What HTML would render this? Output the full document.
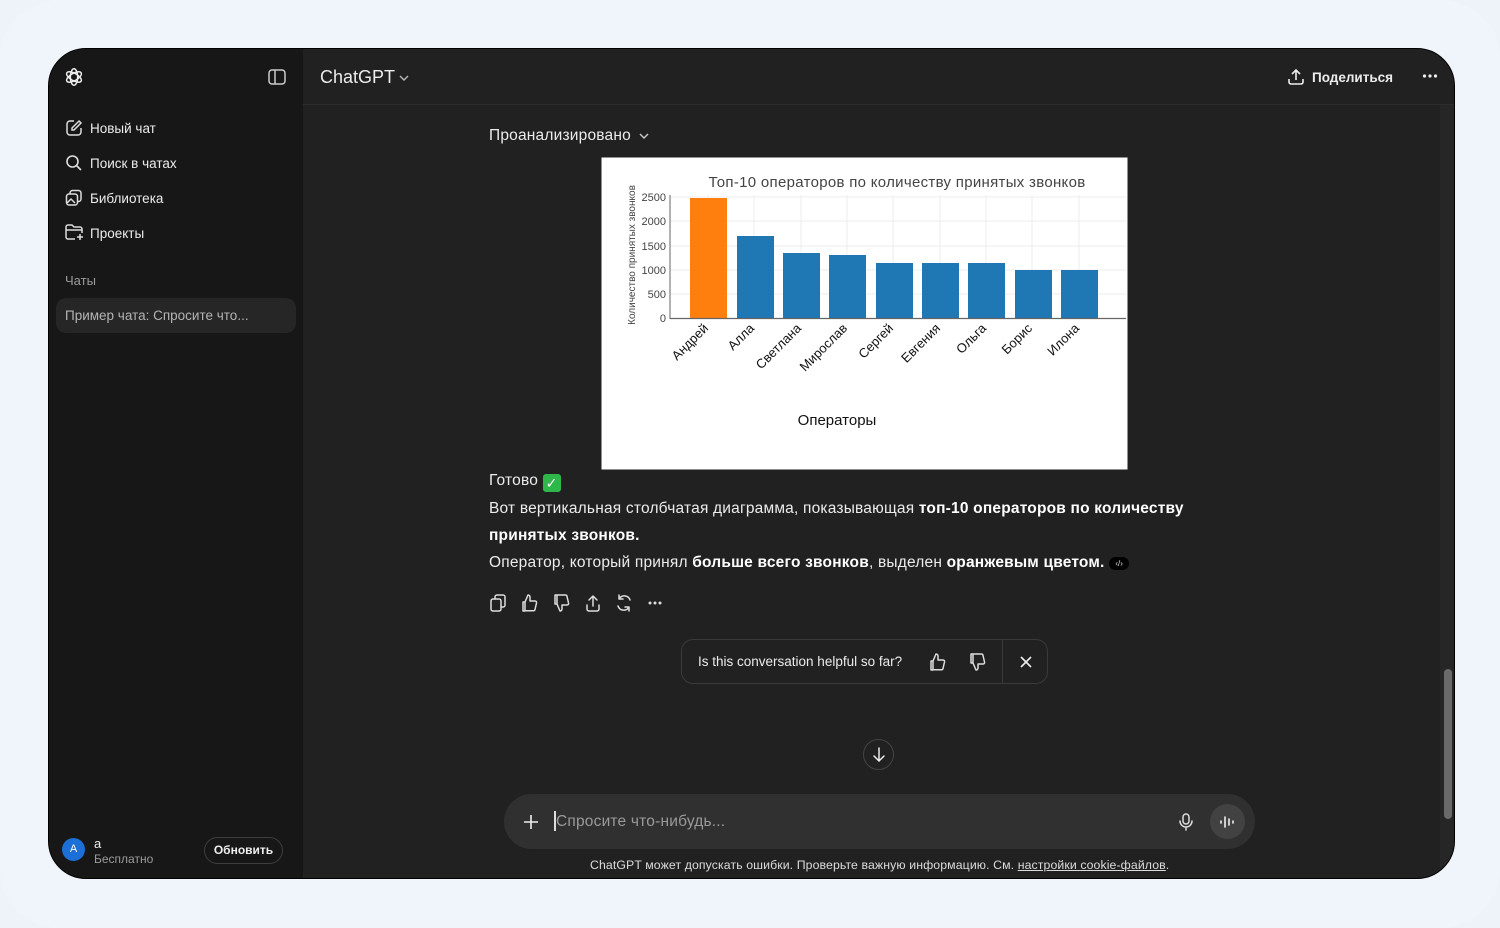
<!DOCTYPE html>
<html><head><meta charset="utf-8"><style>
*{margin:0;padding:0;box-sizing:border-box}
body{width:1500px;height:928px;background:#eef3fa;font-family:"Liberation Sans","DejaVu Sans",sans-serif;position:relative;overflow:hidden;color:#ececec}
.outer{position:absolute;left:0;top:0;width:1500px;height:928px;border-radius:60px;background:#f0f5fc}
.win{position:absolute;left:48px;top:48px;width:1407px;height:831px;border-radius:38px;background:#212121;overflow:hidden;border:1px solid #000}
.side{position:absolute;left:0;top:0;width:254px;height:100%;background:#171717}
.a{position:absolute;white-space:nowrap}
.nav{font-size:13.5px;color:#ececec}
svg{position:absolute}
.b{font-weight:bold;color:#fff}
.t{font-size:15.5px;letter-spacing:0.2px}
</style></head><body>
<div class="outer"></div>
<div class="win">
 <div class="side">
  <svg style="left:14px;top:17px" width="22" height="22" viewBox="0 0 24 24" fill="none" stroke="#eee" stroke-width="1.6"><g transform="translate(12 12)"><ellipse rx="4" ry="9" transform="rotate(0)"/><ellipse rx="4" ry="9" transform="rotate(60)"/><ellipse rx="4" ry="9" transform="rotate(120)"/></g></svg>
  <svg style="left:219px;top:20px" width="18" height="16" viewBox="0 0 18 16" fill="none" stroke="#ccc" stroke-width="1.5"><rect x="1" y="1" width="16" height="14" rx="3"/><line x1="7" y1="1" x2="7" y2="15"/></svg>
  <svg style="left:16px;top:70px" width="18" height="18" viewBox="0 0 18 18" fill="none" stroke="#ddd" stroke-width="1.5"><path d="M9 2H5a3 3 0 0 0-3 3v8a3 3 0 0 0 3 3h8a3 3 0 0 0 3-3V9"/><path d="M14 2l2 2-7 7H7V9z"/></svg>
  <div class="a nav" style="left:41px;top:72px">Новый чат</div>
  <svg style="left:16px;top:105px" width="18" height="18" viewBox="0 0 18 18" fill="none" stroke="#ddd" stroke-width="1.6"><circle cx="7.5" cy="7.5" r="5.5"/><line x1="11.5" y1="11.5" x2="16" y2="16"/></svg>
  <div class="a nav" style="left:41px;top:107px">Поиск в чатах</div>
  <svg style="left:16px;top:140px" width="18" height="18" viewBox="0 0 18 18" fill="none" stroke="#ddd" stroke-width="1.5"><rect x="1.5" y="5" width="11" height="11" rx="2.5"/><path d="M5 5V4a2.5 2.5 0 0 1 2.5-2.5h6A2.5 2.5 0 0 1 16 4v6a2.5 2.5 0 0 1-2.5 2.5h-1"/><path d="M2 14l4-4 4 4"/></svg>
  <div class="a nav" style="left:41px;top:142px">Библиотека</div>
  <svg style="left:16px;top:175px" width="19" height="18" viewBox="0 0 19 18" fill="none" stroke="#ddd" stroke-width="1.5"><path d="M10 15H3a2 2 0 0 1-2-2V3a2 2 0 0 1 2-2h4l2 2h6a2 2 0 0 1 2 2v4"/><line x1="1" y1="6" x2="17" y2="6"/><path d="M15 10v6M12 13h6"/></svg>
  <div class="a nav" style="left:41px;top:177px">Проекты</div>
  <div class="a" style="left:16px;top:224px;font-size:13px;color:#9b9b9b">Чаты</div>
  <div class="a" style="left:7px;top:249px;width:240px;height:35px;border-radius:10px;background:#262626"></div>
  <div class="a" style="left:16px;top:259px;font-size:13.5px;color:#b4b4b4">Пример чата: Спросите что...</div>
  <div class="a" style="left:13px;top:789px;width:23px;height:23px;border-radius:50%;background:#1b6fd6;color:#fff;font-size:11px;text-align:center;line-height:23px">A</div>
  <div class="a" style="left:45px;top:787px;font-size:13px;color:#eee">a</div>
  <div class="a" style="left:45px;top:803px;font-size:12px;color:#9b9b9b">Бесплатно</div>
  <div class="a" style="left:155px;top:788px;width:79px;height:27px;border:1px solid #3e3e3e;border-radius:14px;font-size:12px;font-weight:bold;color:#eee;text-align:center;line-height:25px">Обновить</div>
 </div>
 <div class="a" style="left:254px;top:55px;width:1153px;height:1px;background:#2c2c2c"></div>
 <div class="a" style="left:271px;top:18px;font-size:18px;color:#ececec">ChatGPT</div>
 <svg style="left:349px;top:24px" width="12" height="10" viewBox="0 0 12 10" fill="none" stroke="#bbb" stroke-width="1.4"><path d="M2 3l4 4 4-4"/></svg>
 <svg style="left:1238px;top:19px" width="18" height="18" viewBox="0 0 18 18" fill="none" stroke="#eee" stroke-width="1.6"><path d="M9 12V2M5 6l4-4 4 4"/><path d="M2 11v3a2 2 0 0 0 2 2h10a2 2 0 0 0 2-2v-3"/></svg>
 <div class="a" style="left:1263px;top:21px;font-size:13.5px;font-weight:bold;color:#ececec">Поделиться</div>
 <svg style="left:1373px;top:24px" width="16" height="6" viewBox="0 0 16 6" fill="#eee"><circle cx="2.5" cy="3" r="1.6"/><circle cx="8" cy="3" r="1.6"/><circle cx="13.5" cy="3" r="1.6"/></svg>
 <div class="a" style="left:1391px;top:56px;width:14px;height:775px;background:#262626"></div>
 <div class="a" style="left:1395px;top:620px;width:8px;height:150px;border-radius:4px;background:#6a6a6a"></div>

 <div class="a t" style="left:440px;top:78px;color:#ececec">Проанализировано</div>
 <svg style="left:589px;top:82px" width="12" height="10" viewBox="0 0 12 10" fill="none" stroke="#ccc" stroke-width="1.4"><path d="M2 3l4 4 4-4"/></svg>

 <svg style="left:552px;top:108px" width="527" height="313" viewBox="0 0 527 313" font-family="Liberation Sans, DejaVu Sans, sans-serif">
  <rect x="0" y="0" width="527" height="313" fill="#fff" stroke="#222" stroke-width="1"/>
  <g stroke="#ececec" stroke-width="1">
   <line x1="69" y1="40" x2="525" y2="40"/><line x1="69" y1="64" x2="525" y2="64"/><line x1="69" y1="89" x2="525" y2="89"/><line x1="69" y1="113" x2="525" y2="113"/><line x1="69" y1="137" x2="525" y2="137"/>
   <line x1="107" y1="38" x2="107" y2="161"/><line x1="153" y1="38" x2="153" y2="161"/><line x1="200" y1="38" x2="200" y2="161"/><line x1="246" y1="38" x2="246" y2="161"/><line x1="292" y1="38" x2="292" y2="161"/><line x1="339" y1="38" x2="339" y2="161"/><line x1="385" y1="38" x2="385" y2="161"/><line x1="431" y1="38" x2="431" y2="161"/><line x1="478" y1="38" x2="478" y2="161"/>
  </g>
  <rect x="89" y="41" width="37" height="120" fill="#ff7f0e"/>
  <g fill="#1f77b4">
   <rect x="136" y="79" width="37" height="82"/><rect x="182" y="96" width="37" height="65"/><rect x="228" y="98" width="37" height="63"/><rect x="275" y="106" width="37" height="55"/><rect x="321" y="106" width="37" height="55"/><rect x="367" y="106" width="37" height="55"/><rect x="414" y="113" width="37" height="48"/><rect x="460" y="113" width="37" height="48"/>
  </g>
  <line x1="69" y1="38" x2="69" y2="162" stroke="#666"/>
  <line x1="69" y1="161.5" x2="525" y2="161.5" stroke="#666" stroke-width="1.2"/>
  <text x="296" y="30" font-size="15" fill="#444" text-anchor="middle" letter-spacing="0.3">Топ-10 операторов по количеству принятых звонков</text>
  <g font-size="11" fill="#444" text-anchor="end">
   <text x="65" y="44">2500</text><text x="65" y="68">2000</text><text x="65" y="93">1500</text><text x="65" y="117">1000</text><text x="65" y="141">500</text><text x="65" y="165">0</text>
  </g>
  <text transform="translate(34 98) rotate(-90)" font-size="10" fill="#444" text-anchor="middle">Количество принятых звонков</text>
  <g font-size="13" fill="#111" text-anchor="end">
   <text transform="translate(108 172) rotate(-45)">Андрей</text>
   <text transform="translate(154 172) rotate(-45)">Алла</text>
   <text transform="translate(201 172) rotate(-45)">Светлана</text>
   <text transform="translate(247 172) rotate(-45)">Мирослав</text>
   <text transform="translate(293 172) rotate(-45)">Сергей</text>
   <text transform="translate(340 172) rotate(-45)">Евгения</text>
   <text transform="translate(386 172) rotate(-45)">Ольга</text>
   <text transform="translate(432 172) rotate(-45)">Борис</text>
   <text transform="translate(479 172) rotate(-45)">Илона</text>
  </g>
  <text x="236" y="268" font-size="15" fill="#111" text-anchor="middle">Операторы</text>
 </svg>

 <div class="a t" style="left:440px;top:423px;color:#ececec">Готово <span style="display:inline-block;width:18px;height:18px;background:#2fb84a;border-radius:3px;color:#fff;font-size:14px;text-align:center;line-height:18px;vertical-align:-3px;font-weight:bold">✓</span></div>
 <div class="a t" style="left:440px;top:451px;color:#ececec">Вот вертикальная столбчатая диаграмма, показывающая <span class="b">топ-10 операторов по количеству</span></div>
 <div class="a t" style="left:440px;top:478px"><span class="b">принятых звонков.</span></div>
 <div class="a t" style="left:440px;top:505px;color:#ececec">Оператор, который принял <span class="b">больше всего звонков</span>, выделен <span class="b">оранжевым цветом.</span> <span style="display:inline-block;width:20px;height:13px;border-radius:7px;background:#000;color:#ddd;font-size:8px;text-align:center;line-height:13px;vertical-align:1px;letter-spacing:0">‹/›</span></div>

 <svg style="left:440px;top:544px" width="180" height="20" viewBox="0 0 180 20" fill="none" stroke="#ddd" stroke-width="1.5" stroke-linejoin="round" stroke-linecap="round">
  <rect x="2" y="6" width="10" height="12" rx="2"/><path d="M6 6V4a2 2 0 0 1 2-2h6a2 2 0 0 1 2 2v8a2 2 0 0 1-2 2h-2"/>
  <path d="M36 9h-2v9h2zM36 9l3-7a2 2 0 0 1 2 2v4h5a1.5 1.5 0 0 1 1.5 2l-1.5 6.5a1.5 1.5 0 0 1-1.5 1.2H36"/>
  <path d="M68 11h-2V2h2zM68 11l3 7a2 2 0 0 0 2-2v-4h5a1.5 1.5 0 0 0 1.5-2L78 3.5A1.5 1.5 0 0 0 76.5 2H68"/>
  <path d="M104 13V3M100 7l4-4 4 4M98 12v4a2 2 0 0 0 2 2h8a2 2 0 0 0 2-2v-4"/>
  <path d="M141 7a6 6 0 0 0-11-1M129 13a6 6 0 0 0 11 1M130 2v4h4M140 18v-4h-4"/>
  <g fill="#ddd" stroke="none"><circle cx="161" cy="10" r="1.5"/><circle cx="166" cy="10" r="1.5"/><circle cx="171" cy="10" r="1.5"/></g>
 </svg>

 <div class="a" style="left:632px;top:590px;width:367px;height:45px;border:1px solid #3a3a3a;border-radius:12px"></div>
 <div class="a" style="left:953px;top:590px;width:1px;height:45px;background:#3a3a3a"></div>
 <div class="a" style="left:649px;top:605px;font-size:13.5px;color:#ececec">Is this conversation helpful so far?</div>
 <svg style="left:880px;top:603px" width="60" height="20" viewBox="0 0 60 20" fill="none" stroke="#ddd" stroke-width="1.5" stroke-linejoin="round">
  <path d="M4 9H2v9h2zM4 9l3-7a2 2 0 0 1 2 2v4h5a1.5 1.5 0 0 1 1.5 2L14 16.5a1.5 1.5 0 0 1-1.5 1.2H4"/>
  <path d="M44 11h-2V2h2zM44 11l3 7a2 2 0 0 0 2-2v-4h5a1.5 1.5 0 0 0 1.5-2L54 3.5A1.5 1.5 0 0 0 52.5 2H44"/>
 </svg>
 <svg style="left:970px;top:606px" width="14" height="14" viewBox="0 0 14 14" stroke="#eee" stroke-width="1.6"><path d="M2 2l10 10M12 2L2 12"/></svg>

 <div class="a" style="left:814px;top:690px;width:31px;height:31px;border-radius:50%;border:1px solid #444;background:#212121"></div>
 <svg style="left:821px;top:697px" width="18" height="18" viewBox="0 0 18 18" fill="none" stroke="#eee" stroke-width="1.5" stroke-linecap="round"><path d="M9 2v13M4 10l5 5 5-5"/></svg>

 <div class="a" style="left:455px;top:745px;width:751px;height:55px;border-radius:28px;background:#303030"></div>
 <svg style="left:473px;top:764px" width="18" height="18" viewBox="0 0 18 18" stroke="#eee" stroke-width="1.6"><path d="M9 2v14M2 9h14"/></svg>
 <div class="a" style="left:505px;top:762px;width:1.5px;height:20px;background:#ddd"></div>
 <div class="a" style="left:507px;top:764px;font-size:15.5px;color:#9a9a9a;letter-spacing:0.2px">Спросите что-нибудь...</div>
 <svg style="left:1129px;top:763px" width="16" height="20" viewBox="0 0 16 20" fill="none" stroke="#ddd" stroke-width="1.5" stroke-linecap="round"><rect x="5" y="2" width="6" height="10" rx="3"/><path d="M2 9a6 6 0 0 0 12 0M8 15v3"/></svg>
 <div class="a" style="left:1161px;top:755px;width:35px;height:35px;border-radius:50%;background:#424242"></div>
 <svg style="left:1169px;top:764px" width="18" height="18" viewBox="0 0 18 18" stroke="#eee" stroke-width="1.6" stroke-linecap="round"><path d="M3 8v2M7 4v10M11 6v6M15 8v2"/></svg>
 <div class="a" style="left:541px;top:809px;font-size:12.3px;color:#dcdcdc;letter-spacing:0.1px">ChatGPT может допускать ошибки. Проверьте важную информацию. См. <span style="text-decoration:underline">настройки cookie-файлов</span>.</div>
</div>
</body></html>
